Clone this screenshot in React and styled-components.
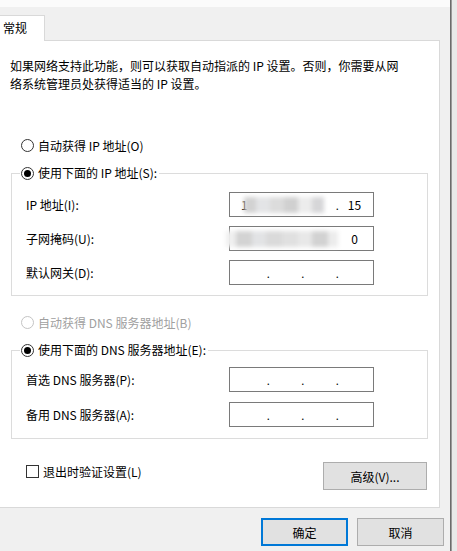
import React from 'react';
import styled, { createGlobalStyle } from 'styled-components';

const GlobalStyle = createGlobalStyle`
  body {
    margin: 0;
    background: #f0f0f0;
    font-family: "Noto Sans CJK SC", "Noto Sans", sans-serif;
    font-size: 12px;
    color: #000;
  }
  * { box-sizing: border-box; }
`

const Window = styled.div`
  display: flex;
  width: 457px;
  height: 551px;
  overflow: hidden;
`

const Main = styled.div`
  width: 450px;
  display: flex;
  flex-direction: column;
  background: #f0f0f0;
`

const Edge = styled.div`
  width: 7px;
  background: linear-gradient(to right, #6b6b6b 0 1px, #9a9a9a 1px 2px, #e9e9e9 2px);
`

const TopStrip = styled.div`
  height: 7px;
  background: #fbfbfb;
`

const TabStrip = styled.div`
  display: flex;
  margin-top: 8px;
  position: relative;
  z-index: 1;
`

const Tab = styled.div`
  width: 45px;
  height: 26px;
  margin-bottom: -1px;
  padding-left: 3px;
  line-height: 24px;
  background: #fff;
  border-top: 1px solid #d9d9d9;
  border-right: 1px solid #d9d9d9;
`

const Panel = styled.div`
  width: 440px;
  height: 468px;
  background: #fff;
  border: 1px solid #d9d9d9;
  border-left: none;
  display: flex;
  flex-direction: column;
`

const Desc = styled.div`
  margin: 16px 0 0 10px;
  line-height: 18px;
  white-space: nowrap;
`

const OptionRow = styled.div`
  display: flex;
  align-items: center;
  gap: 4px;
  height: 18px;
  margin-top: ${p => p.$top}px;
  padding-left: ${p => p.$left ?? 21}px;
  color: ${p => (p.$disabled ? '#a0a0a0' : '#000')};
  white-space: nowrap;
`

const Radio = styled.span`
  width: 13px;
  height: 13px;
  border-radius: 50%;
  border: 1px solid ${p => (p.$disabled ? '#c4c4c4' : '#333')};
  background: #fff;
  display: flex;
  align-items: center;
  justify-content: center;
  &::after {
    content: '';
    display: ${p => (p.$checked ? 'block' : 'none')};
    width: 7px;
    height: 7px;
    border-radius: 50%;
    background: #000;
  }
`

const Check = styled.span`
  width: 13px;
  height: 13px;
  border: 1px solid #333;
  background: #fff;
`

const GroupBox = styled.fieldset`
  margin: ${p => p.$top}px 0 0 11px;
  width: 417px;
  min-inline-size: 0;
  border: 1px solid #dcdcdc;
  padding: ${p => p.$padTop}px 0 ${p => p.$padBottom}px 14px;
  display: flex;
  flex-direction: column;
  gap: ${p => p.$gap}px;
`

const Legend = styled.legend`
  margin-left: -6px;
  padding: 0 2px 0 1px;
  line-height: 18px;
  display: flex;
  align-items: center;
  gap: 4px;
  white-space: nowrap;
`

const FieldRow = styled.div`
  display: flex;
  align-items: center;
  height: 25px;
`

const FieldLabel = styled.span`
  width: 203px;
  white-space: nowrap;
`

const IpBox = styled.div`
  position: relative;
  width: 145px;
  height: 25px;
  border: 1px solid #7a7a7a;
  display: flex;
  align-items: center;
  padding-left: 6px;
`

const Octet = styled.span`
  width: 30px;
  text-align: ${p => p.$align || 'center'};
  padding-left: ${p => (p.$align ? 5 : 0)}px;
`

const Dot = styled.span`
  width: 4.5px;
  text-align: center;
  font-size: 11px;
  visibility: ${p => (p.$hidden ? 'hidden' : 'visible')};
`

const Smudge = styled.div`
  position: absolute;
  top: 4px;
  height: 16px;
  display: flex;
  filter: blur(2px);
`

const SmudgeBit = styled.span`
  height: 100%;
`

const BottomRow = styled.div`
  display: flex;
  justify-content: space-between;
  align-items: flex-start;
  margin-top: 23px;
  padding: 0 12px 0 26px;
`

const Button = styled.button`
  width: ${p => p.$width}px;
  height: 28px;
  background: #e1e1e1;
  border: ${p => (p.$primary ? '2px solid #0078d7' : '1px solid #adadad')};
  font-family: inherit;
  font-size: 12px;
  color: #000;
  padding: 0;
`

const Footer = styled.div`
  display: flex;
  justify-content: flex-end;
  gap: 9px;
  margin-top: 10px;
  padding-right: 6px;
`

// hiddenDots: indexes (1..3) of the separators covered by the smudge
const IpField = ({ octets, smudge, hiddenDots = [] }) => (
  <IpBox>
    {octets.map((o, i) => (
      <React.Fragment key={i}>
        {i > 0 && <Dot $hidden={hiddenDots.includes(i)}>.</Dot>}
        <Octet $align={i === 0 && o ? 'left' : undefined}>{o}</Octet>
      </React.Fragment>
    ))}
    {smudge && (
      <Smudge style={{ left: smudge.left }}>
        {smudge.bits.map(([w, c], i) => (
          <SmudgeBit key={i} style={{ width: w, background: c }} />
        ))}
      </Smudge>
    )}
  </IpBox>
)

const ipSmudge = {
  left: 14,
  bits: [[12, '#d2d2d2'], [14, '#e3e4e6'], [14, '#dcdcdc'], [14, '#d0d0d0'], [14, '#ececec'], [12, '#d6d6d8']],
}
const maskSmudge = {
  left: -4,
  bits: [[10, '#efefef'], [16, '#d3d3d3'], [14, '#e2e3e5'], [16, '#dadada'], [16, '#e0e0e0'], [14, '#e8e8e8'], [16, '#d2d2d2'], [10, '#ececec']],
}

const App = () => (
  <>
    <GlobalStyle />
    <Window>
      <Main>
        <TopStrip />
        <TabStrip>
          <Tab>常规</Tab>
        </TabStrip>
        <Panel>
          <Desc>
            如果网络支持此功能，则可以获取自动指派的 IP 设置。否则，你需要从网
            <br />
            络系统管理员处获得适当的 IP 设置。
          </Desc>

          <OptionRow $top={43}>
            <Radio />
            自动获得 IP 地址(O)
          </OptionRow>

          <GroupBox $top={10} $padTop={10} $padBottom={10} $gap={9}>
            <Legend>
              <Radio $checked />
              使用下面的 IP 地址(S):
            </Legend>
            <FieldRow>
              <FieldLabel>IP 地址(I):</FieldLabel>
              <IpField octets={['1', '', '', '15']} smudge={ipSmudge} hiddenDots={[1, 2]} />
            </FieldRow>
            <FieldRow>
              <FieldLabel>子网掩码(U):</FieldLabel>
              <IpField octets={['', '', '', '0']} smudge={maskSmudge} hiddenDots={[1, 2, 3]} />
            </FieldRow>
            <FieldRow>
              <FieldLabel>默认网关(D):</FieldLabel>
              <IpField octets={['', '', '', '']} />
            </FieldRow>
          </GroupBox>

          <OptionRow $top={17} $disabled>
            <Radio $disabled />
            自动获得 DNS 服务器地址(B)
          </OptionRow>

          <GroupBox $top={10} $padTop={8} $padBottom={11} $gap={10}>
            <Legend>
              <Radio $checked />
              使用下面的 DNS 服务器地址(E):
            </Legend>
            <FieldRow>
              <FieldLabel>首选 DNS 服务器(P):</FieldLabel>
              <IpField octets={['', '', '', '']} />
            </FieldRow>
            <FieldRow>
              <FieldLabel>备用 DNS 服务器(A):</FieldLabel>
              <IpField octets={['', '', '', '']} />
            </FieldRow>
          </GroupBox>

          <BottomRow>
            <OptionRow $top={0} $left={0}>
              <Check />
              退出时验证设置(L)
            </OptionRow>
            <Button $width={104}>高级(V)...</Button>
          </BottomRow>
        </Panel>
        <Footer>
          <Button $width={87} $primary>确定</Button>
          <Button $width={87}>取消</Button>
        </Footer>
      </Main>
      <Edge />
    </Window>
  </>
)

export default App;
